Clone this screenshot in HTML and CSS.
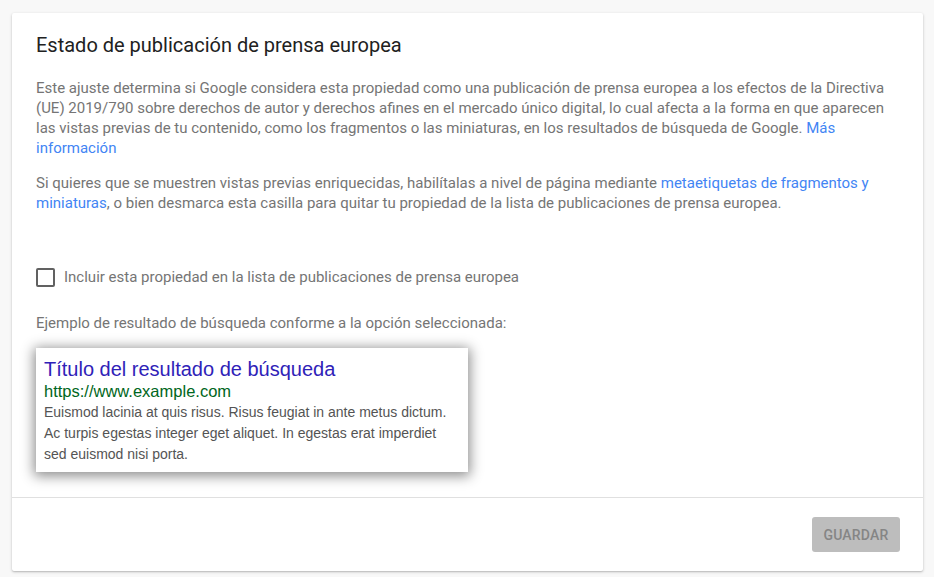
FILE: index.html
```html
<!DOCTYPE html>
<html lang="es">
<head>
<meta charset="utf-8">
<title>Estado de publicación de prensa europea</title>
<link rel="stylesheet" href="styles.css">
</head>
<body>
<div class="card">
  <div class="card-body">
    <h1 class="title">Estado de publicación de prensa europea</h1>
    <p class="text">Este ajuste determina si Google considera esta propiedad como una publicación de prensa europea a los efectos de la Directiva (UE) 2019/790 sobre derechos de autor y derechos afines en el mercado único digital, lo cual afecta a la forma en que aparecen las vistas previas de tu contenido, como los fragmentos o las miniaturas, en los resultados de búsqueda de Google. <a class="link" href="#">Más información</a></p>
    <p class="text text-second">Si quieres que se muestren vistas previas enriquecidas, habilítalas a nivel de página mediante <a class="link" href="#">metaetiquetas de fragmentos y miniaturas</a>, o bien desmarca esta casilla para quitar tu propiedad de la lista de publicaciones de prensa europea.</p>
    <label class="check-row">
      <span class="checkbox"></span>
      <span class="check-label">Incluir esta propiedad en la lista de publicaciones de prensa europea</span>
    </label>
    <p class="text example-label">Ejemplo de resultado de búsqueda conforme a la opción seleccionada:</p>
    <div class="result">
      <div class="result-title">Título del resultado de búsqueda</div>
      <div class="result-url">https://www.example.com</div>
      <div class="result-snippet">Euismod lacinia at quis risus. Risus feugiat in ante metus dictum. Ac turpis egestas integer eget aliquet. In egestas erat imperdiet sed euismod nisi porta.</div>
    </div>
  </div>
  <div class="card-footer">
    <button class="btn-save" disabled>GUARDAR</button>
  </div>
</div>
</body>
</html>
```

FILE: styles.css
```css
html, body {
  margin: 0;
  padding: 0;
}
body {
  background: #f8f8f8;
  font-family: Roboto, "Liberation Sans", Arial, sans-serif;
  padding: 13px 11px 6px 12px;
}
.card {
  background: #fff;
  box-shadow: 0 1px 3px rgba(0,0,0,0.22), 0 1px 1px rgba(0,0,0,0.08);
  border-radius: 2px;
  height: 558px;
  display: flex;
  flex-direction: column;
}
.card-body {
  padding: 20px 24px 0 24px;
  flex: 1;
}
.title {
  margin: 0;
  font-size: 20px;
  line-height: 24px;
  font-weight: 400;
  color: #212121;
}
.text {
  margin: 21px 0 0 0;
  font-size: 15px;
  line-height: 20px;
  color: #757575;
}
.text-second {
  margin-top: 15px;
}
.link {
  color: #4285f4;
  text-decoration: none;
}
.check-row {
  margin-top: 54px;
  display: flex;
  align-items: center;
  height: 20px;
}
.checkbox {
  width: 15px;
  height: 15px;
  border: 2px solid #616161;
  border-radius: 2px;
  margin-right: 9px;
  flex: none;
}
.check-label {
  font-size: 15px;
  line-height: 20px;
  color: #757575;
}
.example-label {
  margin-top: 26px;
}
.result {
  margin-top: 15px;
  width: 416px;
  padding: 10px 8px 7px 8px;
  background: #fff;
  box-shadow: 0 2px 12px 2px rgba(0,0,0,0.45);
  font-family: "Liberation Sans", Arial, sans-serif;
}
.result-title {
  font-size: 20px;
  line-height: 22px;
  color: #2f22b8;
}
.result-url {
  font-size: 16.5px;
  line-height: 22px;
  color: #006621;
}
.result-snippet {
  font-size: 14px;
  line-height: 21px;
  color: #545454;
}
.card-footer {
  border-top: 1px solid #e0e0e0;
  padding: 19px 23px 19px 24px;
  display: flex;
  justify-content: flex-end;
}
.btn-save {
  width: 88px;
  height: 35px;
  border: none;
  border-radius: 3px;
  background: #bdbdbd;
  color: #858585;
  font-family: Roboto, "Liberation Sans", Arial, sans-serif;
  font-size: 14px;
  font-weight: 500;
  letter-spacing: 0.2px;
  padding: 0;
}
```
